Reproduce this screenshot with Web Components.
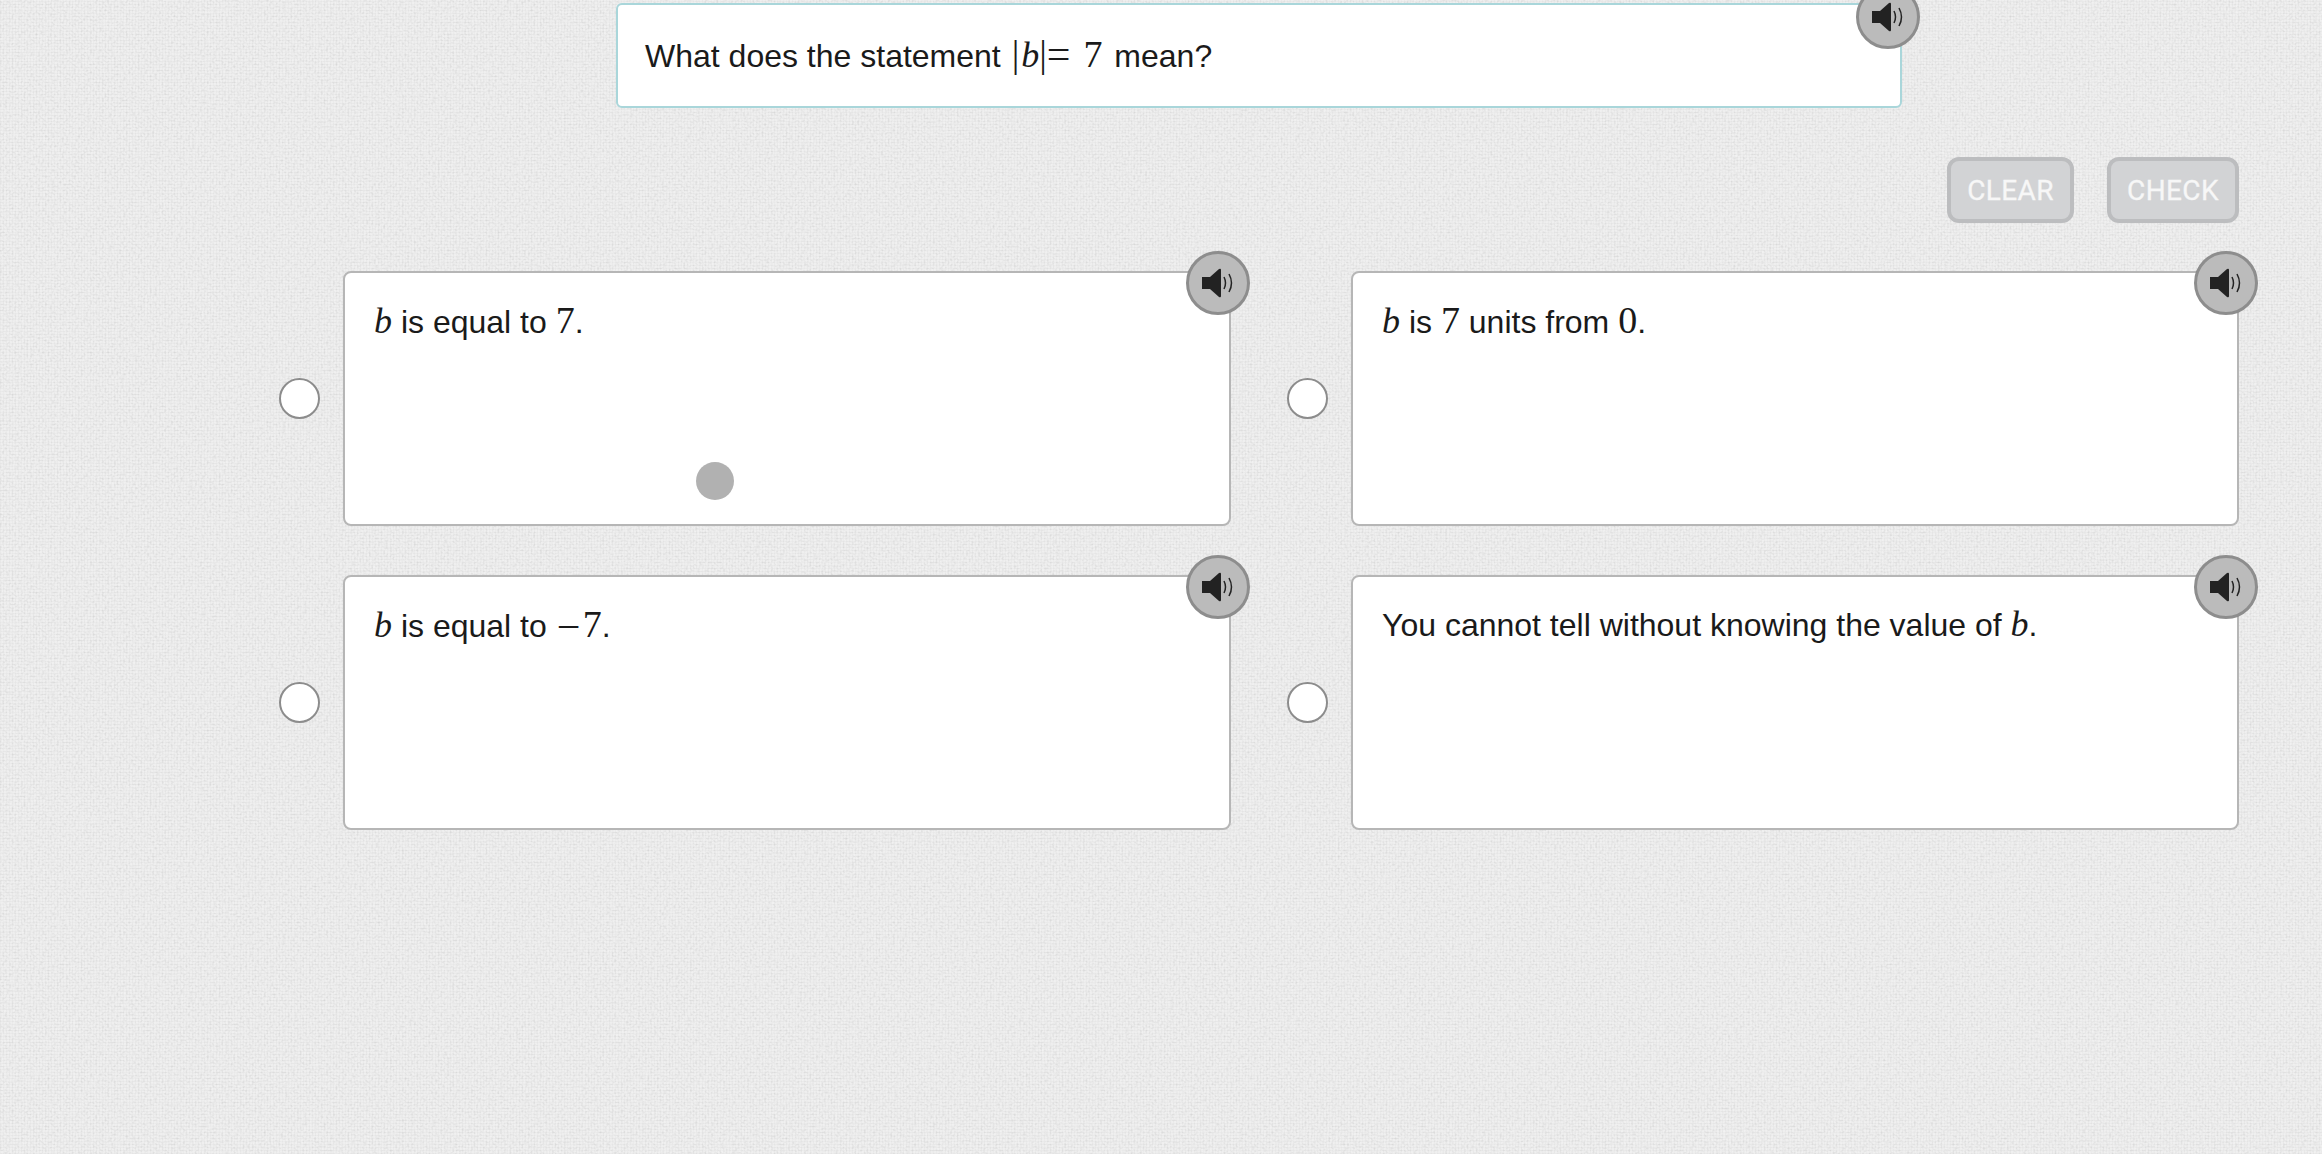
<!DOCTYPE html>
<html>
<head>
<meta charset="utf-8">
<title>Question</title>
<style>
html, body { margin: 0; height: 100%; overflow: hidden; }
body {
    background-color: #efefef;
    background-image:
        repeating-linear-gradient(90deg, rgba(0,0,0,.02) 0 1px, transparent 1px 3px),
        repeating-linear-gradient(0deg, rgba(0,0,0,.02) 0 1px, transparent 1px 3px);
    font-family: "Liberation Sans", Arial, sans-serif;
    color: #1a1a1a;
}
</style>
</head>
<body>
<paper-texture></paper-texture>
<quiz-page>
    <question-card>What does the statement <tex-n style="margin-left:2px">|</tex-n><tex-i style="margin-left:2px">b</tex-i><tex-n>|</tex-n><tex-n style="font-size:42px;vertical-align:-1px">=</tex-n> <tex-n style="margin-left:4px;margin-right:3px">7</tex-n> mean?</question-card>
    <quiz-actions>
        <quiz-button style="--w:127px">CLEAR</quiz-button>
        <quiz-button style="--w:132px">CHECK</quiz-button>
    </quiz-actions>
    <answer-grid>
        <answer-option><tex-i>b</tex-i> is equal to <tex-n>7</tex-n>.<touch-dot slot="extra"></touch-dot></answer-option>
        <answer-option><tex-i>b</tex-i> is <tex-n>7</tex-n> units from <tex-n>0</tex-n>.</answer-option>
        <answer-option><tex-i>b</tex-i> is equal to <tex-n style="font-size:42px;margin:0 2.5px 0 1px;vertical-align:-4px">−</tex-n><tex-n>7</tex-n>.</answer-option>
        <answer-option>You cannot tell without knowing the value of <tex-i>b</tex-i>.</answer-option>
    </answer-grid>
</quiz-page>

<script>
// ------------------------------------------------ SMALL HELPERS -------------------------------------------------------

function define(name, css, html)
{
    const template = document.createElement("template");
    template.innerHTML = `<style>${css}</style>${html}`;

    class Element extends HTMLElement
    {
        constructor()
        {
            super();
            this.attachShadow({ mode: "open" });
            this.shadowRoot.appendChild(template.content.cloneNode(true));
        }
    }

    customElements.define(name, Element);
}

// ------------------------------------------------ BACKGROUND -------------------------------------------------------

// fine grain over the weave set on the body: dark specks and light specks
define("paper-texture", `
    :host { display: block; position: fixed; inset: 0; z-index: -1; }
    svg { display: block; width: 100%; height: 100%; }
`, `
<svg xmlns="http://www.w3.org/2000/svg">
    <filter id="dark" x="0" y="0" width="100%" height="100%">
        <feTurbulence type="fractalNoise" baseFrequency="0.42 0.5" numOctaves="1" seed="3"/>
        <feColorMatrix values="0 0 0 0 0  0 0 0 0 0  0 0 0 0 0  1.6 0 0 0 -0.72"/>
    </filter>
    <filter id="light" x="0" y="0" width="100%" height="100%">
        <feTurbulence type="fractalNoise" baseFrequency="0.5 0.42" numOctaves="1" seed="8"/>
        <feColorMatrix values="0 0 0 0 1  0 0 0 0 1  0 0 0 0 1  1.6 0 0 0 -0.72"/>
    </filter>
    <rect width="100%" height="100%" filter="url(#dark)" opacity=".1"/>
    <rect width="100%" height="100%" filter="url(#light)" opacity=".35"/>
</svg>`);

// ------------------------------------------------ MATH TEXT -------------------------------------------------------

define("tex-i", `
    :host { display: inline; font: italic 36px/36px "Liberation Serif", "Times New Roman", serif; }
`, `<slot></slot>`);

define("tex-n", `
    :host { display: inline; font: 38px/36px "Liberation Serif", "Times New Roman", serif; }
`, `<slot></slot>`);

// ------------------------------------------------ SPEAKER -------------------------------------------------------

define("speaker-button", `
    :host
    {
        display: block;
        position: absolute;
        right: var(--right, -21px);
        top: var(--top, -22px);
        width: 64px;
        height: 64px;
        box-sizing: border-box;
        border: 3px solid #8d8d8d;
        border-radius: 50%;
        background: #bbb;
    }
    svg { display: block; width: 58px; height: 58px; }
`, `
<svg viewBox="0 0 58 58">
    <path d="M13 23h8l9-8q2-1 2 1v26q0 2-2 1l-9-8h-8z" fill="#222"/>
    <path d="M35 23q3 6 0 12M40 20q5 9 0 18" fill="none" stroke="#222" stroke-width="1.5"/>
</svg>`);

// ------------------------------------------------ PAGE LAYOUT -------------------------------------------------------

define("quiz-page", `
    :host
    {
        display: flex;
        flex-direction: column;
        box-sizing: border-box;
        padding: 3px 83px 0 279px;
    }
`, `<slot></slot>`);

define("question-card", `
    :host
    {
        display: flex;
        align-items: center;
        position: relative;
        align-self: flex-end;
        box-sizing: border-box;
        width: 1286px;
        margin-right: 337px;
        height: 105px;
        padding: 0 27px 2px;
        border: 2px solid #a9d6da;
        border-radius: 6px;
        background: #fff;
        font-size: 32px;
        line-height: 36px;
    }
`, `<div class="text"><slot></slot></div><speaker-button style="--top:-20px;--right:-20px"></speaker-button>`);

define("quiz-actions", `
    :host
    {
        display: flex;
        justify-content: flex-end;
        gap: 33px;
        margin-top: 49px;
    }
`, `<slot></slot>`);

define("quiz-button", `
    :host
    {
        display: flex;
        align-items: center;
        justify-content: center;
        box-sizing: border-box;
        width: var(--w);
        height: 66px;
        padding-top: 1px;
        border: 4px solid #bcbdbf;
        border-radius: 12px;
        background: #d2d3d5;
        color: #f7f7f7;
        font: 400 28px Roboto, "Liberation Sans", sans-serif;
        letter-spacing: .4px;
        -webkit-text-stroke: .3px #f7f7f7;
    }
`, `<slot></slot>`);

define("answer-grid", `
    :host
    {
        display: grid;
        grid-template-columns: 952px 952px;
        grid-auto-rows: 255px;
        column-gap: 56px;
        row-gap: 49px;
        margin-top: 48px;
    }
`, `<slot></slot>`);

define("answer-option", `
    :host
    {
        display: flex;
        align-items: center;
        gap: 23px;
    }
    .radio
    {
        flex: none;
        box-sizing: border-box;
        width: 41px;
        height: 41px;
        border: 2px solid #8c8c8c;
        border-radius: 50%;
        background: #fff;
    }
    .card
    {
        position: relative;
        flex: 1;
        box-sizing: border-box;
        height: 100%;
        padding: 29px 29px;
        border: 2px solid #b6b6b6;
        border-radius: 8px;
        background: #fff;
        font-size: 32px;
        line-height: 36px;
    }
`, `
<div class="radio"></div>
<div class="card"><slot></slot><slot name="extra"></slot><speaker-button></speaker-button></div>`);

// the grey dot is the touch marker that sits over the first card
define("touch-dot", `
    :host
    {
        display: block;
        position: absolute;
        left: 351px;
        top: 189px;
        width: 38px;
        height: 38px;
        border-radius: 50%;
        background: #b1b1b1;
    }
`, ``);
</script>
</body>
</html>
